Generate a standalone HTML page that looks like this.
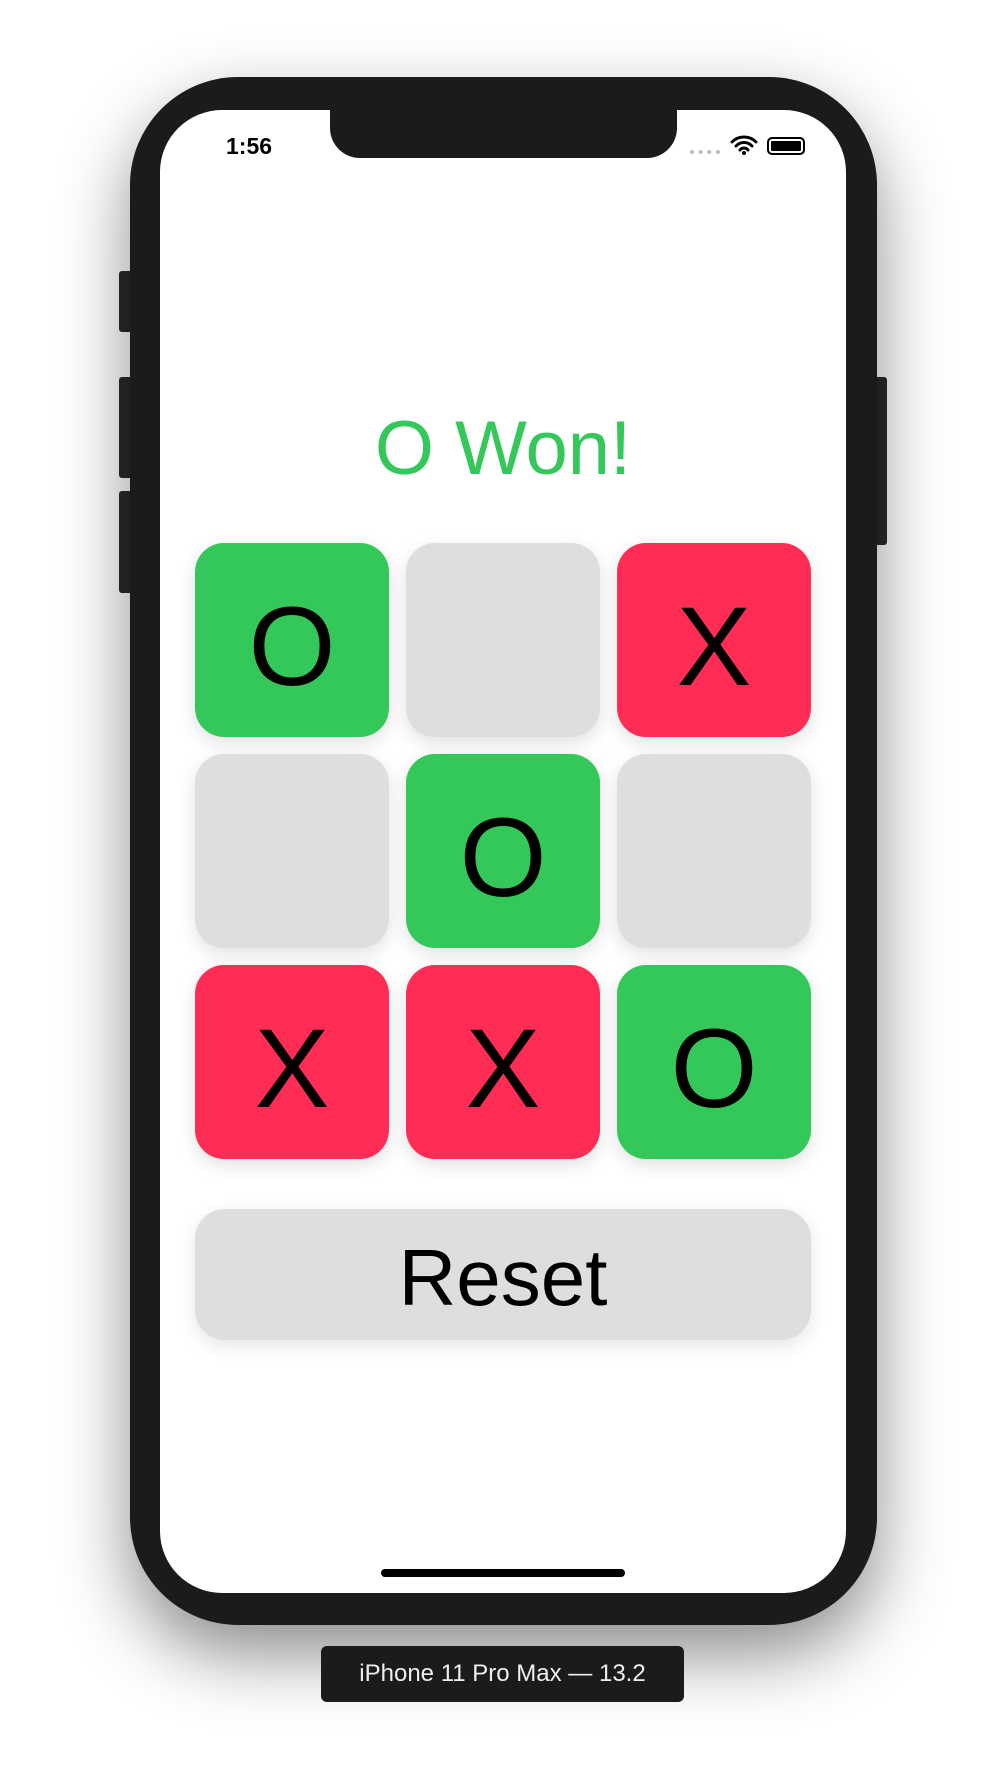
<!DOCTYPE html><html><head><style>
body{margin:0;width:1006px;height:1774px;background:#fff;position:relative;overflow:hidden;font-family:"Liberation Sans",sans-serif}
.a{position:absolute}
.phone{left:130px;top:77px;width:747px;height:1548px;background:#1b1b1b;border-radius:108px;box-shadow:0 30px 70px rgba(0,0,0,.45)}
.screen{left:160px;top:110px;width:686px;height:1483px;background:#fff;border-radius:62px;overflow:hidden}
.notch{left:170px;top:-2px;width:347px;height:50px;background:#1b1b1b;border-radius:0 0 30px 30px}
.btn{background:#2a2a2a;border-radius:3px}
.cell{width:194px;height:194px;box-sizing:border-box;padding-top:12px;border-radius:29px;display:flex;align-items:center;justify-content:center;font-size:112px;color:#000;box-shadow:0 6px 18px rgba(0,0,0,.12)}
.g{background:#34C759}.r{background:#FF2D55}.e{background:#DEDEDE}
</style></head><body>
<div class="a btn" style="left:119px;top:271px;width:14px;height:61px"></div>
<div class="a btn" style="left:119px;top:377px;width:14px;height:101px"></div>
<div class="a btn" style="left:119px;top:491px;width:14px;height:102px"></div>
<div class="a btn" style="left:874px;top:377px;width:13px;height:168px"></div>
<div class="a phone"></div>
<div class="a screen">
 <div class="a notch"></div>
 <div class="a" style="left:66px;top:23px;font-size:23px;font-weight:bold">1:56</div>
 <div class="a" style="left:530px;top:40px;width:30px;height:4px;border-top:4px dotted #bbb"></div>
 <svg class="a" style="left:570px;top:24px" width="28" height="22" viewBox="0 0 28 22"><path d="M2 8a17 17 0 0 1 24 0M6 12a11 11 0 0 1 16 0M10 16a5 5 0 0 1 8 0" stroke="#000" stroke-width="3" fill="none" stroke-linecap="round"/><circle cx="14" cy="19" r="2" fill="#000"/></svg>
 <div class="a" style="left:607px;top:27px;width:34px;height:14px;border:2px solid #000;border-radius:5px;background:#000;box-shadow:inset 0 0 0 2px #fff"></div>
 <div class="a" style="left:0;top:295px;width:686px;text-align:center;font-size:76px;color:#34C759">O Won!</div>
</div>
<div class="a cell g" style="left:195px;top:543px">O</div>
<div class="a cell e" style="left:406px;top:543px"></div>
<div class="a cell r" style="left:617px;top:543px">X</div>
<div class="a cell e" style="left:195px;top:754px"></div>
<div class="a cell g" style="left:406px;top:754px">O</div>
<div class="a cell e" style="left:617px;top:754px"></div>
<div class="a cell r" style="left:195px;top:965px">X</div>
<div class="a cell r" style="left:406px;top:965px">X</div>
<div class="a cell g" style="left:617px;top:965px">O</div>
<div class="a" style="left:195px;top:1209px;width:616px;height:131px;box-sizing:border-box;padding-top:6px;border-radius:30px;background:#DEDEDE;display:flex;align-items:center;justify-content:center;font-size:80px;box-shadow:0 6px 18px rgba(0,0,0,.1)">Reset</div>
<div class="a" style="left:381px;top:1569px;width:244px;height:8px;border-radius:4px;background:#000"></div>
<div class="a" style="left:321px;top:1646px;width:363px;height:56px;background:#1b1b1b;border-radius:6px;color:#eee;font-size:24px;display:flex;align-items:center;justify-content:center">iPhone 11 Pro Max — 13.2</div>
</body></html>
